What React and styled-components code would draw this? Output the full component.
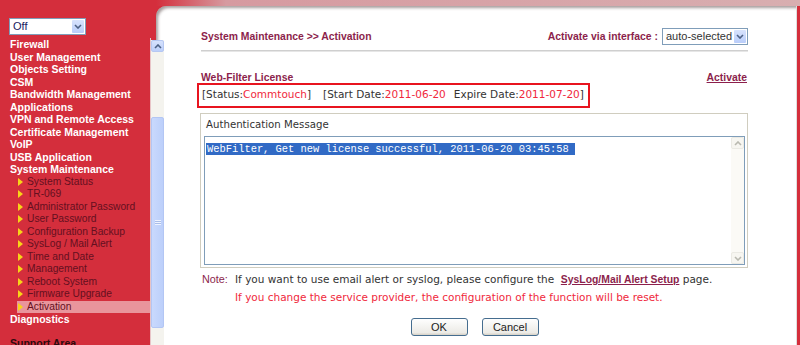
import React from 'react';
import styled, { createGlobalStyle } from 'styled-components';

const GlobalStyle = createGlobalStyle`
  html, body {
    margin: 0;
    padding: 0;
  }
  body {
    width: 800px;
    height: 345px;
    overflow: hidden;
    background: #d42e3c;
    font-family: "Liberation Sans", Arial, sans-serif;
  }
`;

const menuTop = [
    'Firewall',
    'User Management',
    'Objects Setting',
    'CSM',
    'Bandwidth Management',
    'Applications',
    'VPN and Remote Access',
    'Certificate Management',
    'VoIP',
    'USB Application',
    'System Maintenance',
];

const subMenu = [
    'System Status',
    'TR-069',
    'Administrator Password',
    'User Password',
    'Configuration Backup',
    'SysLog / Mail Alert',
    'Time and Date',
    'Management',
    'Reboot System',
    'Firmware Upgrade',
    'Activation',
];

const Chevron = ({ up, color = '#4d6185' }) => (
    <svg width="8" height="5" viewBox="0 0 8 5">
        <polyline
            points={up ? '1,4 4,1 7,4' : '1,1 4,4 7,1'}
            fill="none"
            stroke={color}
            strokeWidth="1.6"
        />
    </svg>
);

const App = () => {
    return (
        <Page>
            <GlobalStyle />
            {/* Left menu */}
            <Side>
                <SideTop>
                    <Select $w={77}>
                        <SelectText $color="#1a1a60">Off</SelectText>
                        <SelectBtn><Chevron /></SelectBtn>
                    </Select>
                </SideTop>
                <MenuFrame>
                    <MenuList>
                        {menuTop.map((m) => (
                            <MenuItem key={m}>{m}</MenuItem>
                        ))}
                        {subMenu.map((s) => (
                            <SubItem key={s} $active={s === 'Activation'}>
                                <Arrow />
                                {s}
                            </SubItem>
                        ))}
                        <MenuItem>Diagnostics</MenuItem>
                        <MenuItem $dark>Support Area</MenuItem>
                    </MenuList>
                    <ScrollBar>
                        <ScrollBtn><Chevron up /></ScrollBtn>
                        <Thumb><Grip /></Thumb>
                    </ScrollBar>
                </MenuFrame>
            </Side>

            {/* Main panel */}
            <Main>
                <TopStrip />
                <Panel>
                    <Content>
                        <TitleRow>
                            <Title>System Maintenance &gt;&gt; Activation</Title>
                            <Interface>
                                <Title>Activate via interface :</Title>
                                <Select $w={86}>
                                    <SelectText $color="#333">auto-selected</SelectText>
                                    <SelectBtn><Chevron /></SelectBtn>
                                </Select>
                            </Interface>
                        </TitleRow>
                        <Rule />
                        <LicenseRow>
                            <Title>Web-Filter License</Title>
                            <Link>Activate</Link>
                        </LicenseRow>
                        <StatusBox>
                            <span>[Status:<Val>Commtouch</Val>]</span>
                            <StatusGroup>
                                [Start Date:<Val>2011-06-20</Val>
                                <Gap />Expire Date:<Val>2011-07-20</Val>]
                            </StatusGroup>
                        </StatusBox>
                        <Fieldset>
                            <Legend>Authentication Message</Legend>
                            <TextBox>
                                <TextArea>
                                    <Selected>WebFilter, Get new license successful, 2011-06-20 03:45:58</Selected>
                                </TextArea>
                                <AreaScroll>
                                    <AreaBtn><Chevron up color="#b9b9b0" /></AreaBtn>
                                    <AreaBtn><Chevron color="#b9b9b0" /></AreaBtn>
                                </AreaScroll>
                            </TextBox>
                        </Fieldset>
                        <Note>
                            <NoteLabel>Note:</NoteLabel>
                            <NoteText>
                                If you want to use email alert or syslog, please configure the&nbsp;{' '}
                                <NoteLink>SysLog/Mail Alert Setup</NoteLink> page.
                            </NoteText>
                            <span />
                            <NoteText $warn>
                                If you change the service provider, the configuration of the function will be reset.
                            </NoteText>
                        </Note>
                        <Buttons>
                            <Button>OK</Button>
                            <Button>Cancel</Button>
                        </Buttons>
                    </Content>
                </Panel>
            </Main>
        </Page>
    );
};

const Page = styled.div`
    display: flex;
    width: 800px;
    height: 345px;
    overflow: hidden;
    background: #d42e3c;
`;

/* ---------- sidebar ---------- */

const Side = styled.div`
    width: 156px;
    flex-shrink: 0;
    display: flex;
    flex-direction: column;
`;

const SideTop = styled.div`
    height: 38px;
    padding: 18px 0 0 9px;
    box-sizing: border-box;
`;

const MenuFrame = styled.div`
    position: relative;
    z-index: 1;
    width: 164px;
    flex: 1;
    display: flex;
    min-height: 0;
`;

const MenuList = styled.div`
    width: 151px;
    box-sizing: border-box;
    border-right: 1px solid #e8c4c7;
    background: #d42e3c;
    overflow: hidden;
`;

const MenuItem = styled.div`
    font: bold 10.5px/12.5px "Liberation Sans", Arial, sans-serif;
    color: ${(p) => (p.$dark ? '#2b0a0e' : '#fff')};
    padding-left: 10px;
    white-space: nowrap;
    margin-top: ${(p) => (p.$dark ? '11.5px' : '0')};
`;

const SubItem = styled.div`
    display: flex;
    align-items: center;
    gap: 4px;
    height: 12.5px;
    margin-left: 17px;
    padding-left: 1px;
    font: 10.25px/12.5px "Liberation Sans", Arial, sans-serif;
    color: #641020;
    white-space: nowrap;
    background: ${(p) => (p.$active ? '#e9959c' : 'transparent')};
`;

const Arrow = styled.span`
    width: 0;
    height: 0;
    border-left: 5px solid #f8d418;
    border-top: 4px solid transparent;
    border-bottom: 4px solid transparent;
`;

const ScrollBar = styled.div`
    width: 13px;
    margin-top: 2px;
    background: #f4f3ee;
    display: flex;
    flex-direction: column;
`;

const ScrollBtn = styled.div`
    height: 12px;
    display: flex;
    align-items: center;
    justify-content: center;
    background: linear-gradient(#d6e2fd, #bccffa);
    border: 1px solid #b5c7f2;
    border-radius: 2px;
    box-sizing: border-box;
`;

const Thumb = styled.div`
    margin-top: 65px;
    height: 211px;
    box-sizing: border-box;
    border: 1px solid #b3c6f4;
    border-radius: 2px;
    background: linear-gradient(to right, #c9d9fd, #bccffa);
    display: flex;
    align-items: center;
    justify-content: center;
`;

const Grip = styled.div`
    width: 6px;
    height: 5px;
    background: repeating-linear-gradient(#eef3ff 0 1px, #a9bde9 1px 2px);
`;

/* ---------- selects ---------- */

const Select = styled.div`
    display: flex;
    width: ${(p) => p.$w}px;
    height: 17px;
    box-sizing: border-box;
    border: 1px solid #7f9db9;
    background: #fff;
    padding: 1px;
`;

const SelectText = styled.div`
    flex: 1;
    padding-left: 2px;
    font: 11px/13px "Liberation Sans", Arial, sans-serif;
    color: ${(p) => p.$color};
    white-space: nowrap;
    overflow: hidden;
`;

const SelectBtn = styled.div`
    width: 12px;
    display: flex;
    align-items: center;
    justify-content: center;
    background: linear-gradient(#d8e3fd, #b9cdfa);
    border-radius: 1px;
`;

/* ---------- main panel ---------- */

const Main = styled.div`
    flex: 1;
    display: flex;
    flex-direction: column;
    min-width: 0;
`;

const TopStrip = styled.div`
    height: 6px;
    flex-shrink: 0;
    background: linear-gradient(to right, #d42e3c 0, #d69aa0 70px, #d8aeb0 100%);
`;

const Panel = styled.div`
    flex: 1;
    background: #fff;
    border-top-left-radius: 10px;
    border-right: 1px solid #dedede;
    margin-right: 3px;
    box-shadow: inset 3px 3px 3px -1px rgba(60, 40, 40, 0.45);
`;

const Content = styled.div`
    width: 547px;
    margin-left: 45px;
    padding-top: 22px;
`;

const TitleRow = styled.div`
    display: flex;
    justify-content: space-between;
    align-items: center;
    height: 17px;
`;

const Title = styled.div`
    font: bold 10.4px/12px "Liberation Sans", Arial, sans-serif;
    color: #8c1f4c;
    white-space: nowrap;
`;

const Interface = styled.div`
    display: flex;
    align-items: center;
    gap: 4px;
`;

const Rule = styled.div`
    height: 2px;
    margin-top: 5px;
    background: linear-gradient(#cfcfcf 0 1px, #e6e6e6 1px);
`;

const LicenseRow = styled.div`
    display: flex;
    justify-content: space-between;
    align-items: center;
    height: 12px;
    margin-top: 20px;
`;

const Link = styled(Title)`
    text-decoration: underline;
    padding-right: 1px;
`;

const StatusBox = styled.div`
    display: flex;
    width: 393px;
    height: 25px;
    margin: -1px 0 0 -4px;
    box-sizing: border-box;
    border: 2px solid #e8141f;
    padding-left: 3px;
    font: 10.5px/19px "DejaVu Sans", Verdana, sans-serif;
    color: #333;
    white-space: nowrap;
`;

const StatusGroup = styled.span`
    margin-left: 12px;
`;

const Gap = styled.span`
    display: inline-block;
    width: 8px;
`;

const Val = styled.span`
    color: #f0283c;
`;

const Fieldset = styled.div`
    width: 548px;
    height: 155px;
    margin: 5px 0 0 -1px;
    box-sizing: border-box;
    border: 1px solid #d0cdbf;
    box-shadow: inset 1px 1px 0 #fff, 1px 1px 0 #fff;
    padding: 3px 2px 2px 3px;
    display: flex;
    flex-direction: column;
`;

const Legend = styled.div`
    font: 10.2px/13px "DejaVu Sans", Verdana, sans-serif;
    color: #333;
    padding-left: 2px;
    margin-top: 1px;
`;

const TextBox = styled.div`
    flex: 1;
    margin-top: 5px;
    border: 1px solid #7f9db9;
    display: flex;
`;

const TextArea = styled.div`
    flex: 1;
    padding: 1px 0 0 1px;
`;

const Selected = styled.span`
    display: inline-block;
    background: #316ac5;
    color: #fff;
    font: 10.4px/12px "Liberation Mono", "Courier New", monospace;
    padding: 0 6px 0 1px;
    white-space: nowrap;
`;

const AreaScroll = styled.div`
    width: 13px;
    background: #fbfaf6;
    display: flex;
    flex-direction: column;
    justify-content: space-between;
`;

const AreaBtn = styled.div`
    height: 12px;
    display: flex;
    align-items: center;
    justify-content: center;
    border: 1px solid #ebeae4;
    border-radius: 2px;
    background: #f7f6f1;
    box-sizing: border-box;
`;

const Note = styled.div`
    display: grid;
    grid-template-columns: 34px auto;
    margin-top: 3px;
    font: 10.5px/16.5px "DejaVu Sans", Verdana, sans-serif;
    color: #333;
    white-space: nowrap;
`;

const NoteLabel = styled.span`
    font: 10.8px/16.5px "Liberation Sans", Arial, sans-serif;
    color: #8c1f4c;
    padding-left: 1px;
`;

const NoteText = styled.span`
    color: ${(p) => (p.$warn ? '#f0283c' : '#333')};
`;

const NoteLink = styled.span`
    font: bold 10.4px/16.5px "Liberation Sans", Arial, sans-serif;
    color: #8c1f4c;
    text-decoration: underline;
`;

const Buttons = styled.div`
    display: flex;
    justify-content: center;
    gap: 14px;
    margin-top: 13px;
`;

const Button = styled.button`
    width: 57px;
    height: 18px;
    padding: 0;
    border: 1px solid #456d8f;
    border-radius: 3px;
    background: linear-gradient(#fefefe, #ecebe6 85%, #d6d0c5);
    font: 11px/14px "Liberation Sans", Arial, sans-serif;
    color: #222;
`;

export default App;
